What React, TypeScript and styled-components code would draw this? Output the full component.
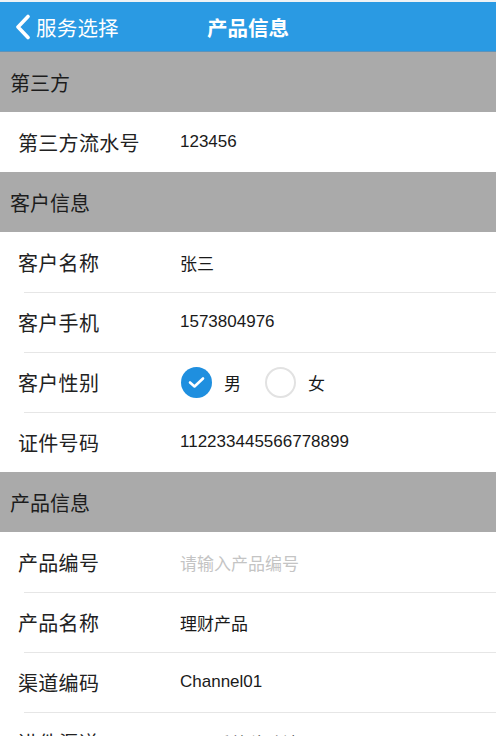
import styled, { createGlobalStyle } from "styled-components";

const GlobalStyle = createGlobalStyle`
  html, body {
    margin: 0;
    padding: 0;
    background: #ffffff;
    font-family: "Liberation Sans", "Noto Sans CJK SC", sans-serif;
    -webkit-font-smoothing: antialiased;
  }
`;

const Page = styled.div`
  width: 496px;
  height: 736px;
  overflow: hidden;
  background: #ffffff;
`;

const NavBar = styled.header`
  display: grid;
  grid-template-columns: 1fr auto 1fr;
  align-items: center;
  height: 49px;
  border-top: 2px solid #eef2f5;
  border-bottom: 1px solid #5d93bb;
  background: #2a9ae3;
  color: #ffffff;
`;

const BackButton = styled.div`
  display: flex;
  align-items: center;
  gap: 4px;
  padding-left: 14px;
  font-size: 20.5px;
  letter-spacing: 0.2px;
`;

const Title = styled.h1`
  margin: 0;
  font-size: 20.5px;
  font-weight: 700;
`;

const SectionTitle = styled.div`
  display: flex;
  align-items: center;
  height: 60px;
  padding-left: 10px;
  background: #aaaaaa;
  color: #1c1c1c;
  font-size: 20px;
`;

const Row = styled.div`
  position: relative;
  display: flex;
  align-items: center;
  height: 60px;
  padding-left: 18px;

  & + &::before {
    content: "";
    position: absolute;
    top: 0;
    left: 24px;
    right: 0;
    height: 1px;
    background: #e6e6e6;
  }
`;

const Label = styled.span`
  width: 162px;
  color: #222222;
  font-size: 20px;
  letter-spacing: 0.3px;
`;

const Value = styled.span<{ $placeholder?: boolean }>`
  color: ${(p) => (p.$placeholder ? "#c4c4c4" : "#1a1a1a")};
  font-size: 17px;
`;

const RadioGroup = styled.div`
  display: flex;
  align-items: center;
  gap: 24px;
  margin-left: 1px;
`;

const RadioOption = styled.label`
  display: flex;
  align-items: center;
  gap: 12px;
  color: #1a1a1a;
  font-size: 17px;
`;

const RadioMark = styled.span<{ $checked?: boolean }>`
  display: flex;
  align-items: center;
  justify-content: center;
  box-sizing: border-box;
  width: 31px;
  height: 31px;
  border-radius: 50%;
  background: ${(p) => (p.$checked ? "#1f8fdf" : "#ffffff")};
  border: ${(p) => (p.$checked ? "none" : "2px solid #e2e2e2")};
`;

type Field = { label: string; value?: string; placeholder?: string; gender?: boolean };
type Section = { title: string; fields: Field[] };

const sections: Section[] = [
  { title: "第三方", fields: [{ label: "第三方流水号", value: "123456" }] },
  {
    title: "客户信息",
    fields: [
      { label: "客户名称", value: "张三" },
      { label: "客户手机", value: "1573804976" },
      { label: "客户性别", gender: true },
      { label: "证件号码", value: "112233445566778899" },
    ],
  },
  {
    title: "产品信息",
    fields: [
      { label: "产品编号", placeholder: "请输入产品编号" },
      { label: "产品名称", value: "理财产品" },
      { label: "渠道编码", value: "Channel01" },
      { label: "进件渠道", value: "双录系统移动端" },
    ],
  },
];

function Chevron() {
  return (
    <svg width="18" height="26" viewBox="0 0 18 26">
      <polyline
        points="14,2.5 4,13 14,23.5"
        fill="none"
        stroke="#ffffff"
        strokeWidth="3.6"
        strokeLinecap="round"
        strokeLinejoin="round"
      />
    </svg>
  );
}

function Check() {
  return (
    <svg width="17" height="13" viewBox="0 0 17 13">
      <polyline
        points="2,6.5 6.5,10.5 15,2.5"
        fill="none"
        stroke="#ffffff"
        strokeWidth="2.6"
        strokeLinecap="round"
        strokeLinejoin="round"
      />
    </svg>
  );
}

export default function App() {
  return (
    <Page>
      <GlobalStyle />
      <NavBar>
        <BackButton>
          <Chevron />
          服务选择
        </BackButton>
        <Title>产品信息</Title>
        <span />
      </NavBar>
      {sections.map((s) => (
        <section key={s.title}>
          <SectionTitle>{s.title}</SectionTitle>
          {s.fields.map((f) => (
            <Row key={f.label}>
              <Label>{f.label}</Label>
              {f.gender ? (
                <RadioGroup>
                  <RadioOption>
                    <RadioMark $checked>
                      <Check />
                    </RadioMark>
                    男
                  </RadioOption>
                  <RadioOption>
                    <RadioMark />
                    女
                  </RadioOption>
                </RadioGroup>
              ) : f.placeholder ? (
                <Value $placeholder>{f.placeholder}</Value>
              ) : (
                <Value>{f.value}</Value>
              )}
            </Row>
          ))}
        </section>
      ))}
    </Page>
  );
}
